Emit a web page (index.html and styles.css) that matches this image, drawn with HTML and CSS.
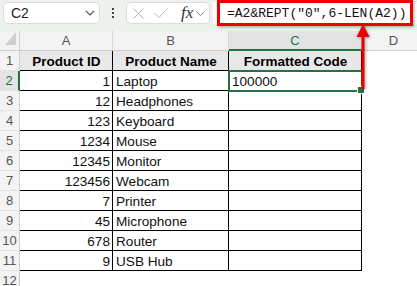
FILE: index.html
```html
<!DOCTYPE html>
<html>
<head>
<meta charset="utf-8">
<link rel="stylesheet" href="styles.css">
</head>
<body>
<div class="app">
  <div class="fbar">
    <div class="namebox">
      <span class="ref">C2</span>
      <svg class="chev" width="10" height="6" viewBox="0 0 10 6"><path d="M1 1 L5 5 L9 1" fill="none" stroke="#555" stroke-width="1.2"/></svg>
    </div>
    <div class="dots"><i></i><i></i><i></i></div>
    <div class="fxbox">
      <svg class="ico" width="11" height="11" viewBox="0 0 11 11"><path d="M0.5 0.5 L10.5 10.5 M10.5 0.5 L0.5 10.5" stroke="#b3b3b3" stroke-width="1"/></svg>
      <svg class="ico chk" width="14" height="10" viewBox="0 0 14 10"><path d="M0.5 5 L5 9.5 L13.5 0.5" fill="none" stroke="#b3b3b3" stroke-width="1"/></svg>
      <span class="fx">fx</span>
      <svg class="chev2" width="9" height="5" viewBox="0 0 9 5"><path d="M0.5 0.5 L4.5 4.5 L8.5 0.5" fill="none" stroke="#888" stroke-width="1"/></svg>
    </div>
    <div class="input"><span class="formula">=A2&amp;REPT("0",6-LEN(A2))</span></div>
  </div>

  <div class="sheet">
    <div class="corner"><svg width="11" height="13" viewBox="0 0 11 13"><polygon points="11,0 11,13 0,13" fill="#cfcfcf"/></svg></div>
    <div class="ch">A</div>
    <div class="ch">B</div>
    <div class="ch sel">C</div>
    <div class="ch">D</div>

    <div class="rh">1</div>
    <div class="c th">Product ID</div>
    <div class="c th">Product Name</div>
    <div class="c th">Formatted Code</div>
    <div class="e"></div>

    <div class="rh sel">2</div>
    <div class="c num">1</div>
    <div class="c">Laptop</div>
    <div class="c active">100000</div>
    <div class="e"></div>

    <div class="rh">3</div>
    <div class="c num">12</div>
    <div class="c">Headphones</div>
    <div class="c"></div>
    <div class="e"></div>

    <div class="rh">4</div>
    <div class="c num">123</div>
    <div class="c">Keyboard</div>
    <div class="c"></div>
    <div class="e"></div>

    <div class="rh">5</div>
    <div class="c num">1234</div>
    <div class="c">Mouse</div>
    <div class="c"></div>
    <div class="e"></div>

    <div class="rh">6</div>
    <div class="c num">12345</div>
    <div class="c">Monitor</div>
    <div class="c"></div>
    <div class="e"></div>

    <div class="rh">7</div>
    <div class="c num">123456</div>
    <div class="c">Webcam</div>
    <div class="c"></div>
    <div class="e"></div>

    <div class="rh">8</div>
    <div class="c num">7</div>
    <div class="c">Printer</div>
    <div class="c"></div>
    <div class="e"></div>

    <div class="rh">9</div>
    <div class="c num">45</div>
    <div class="c">Microphone</div>
    <div class="c"></div>
    <div class="e"></div>

    <div class="rh">10</div>
    <div class="c num">678</div>
    <div class="c">Router</div>
    <div class="c"></div>
    <div class="e"></div>

    <div class="rh">11</div>
    <div class="c num">9</div>
    <div class="c">USB Hub</div>
    <div class="c"></div>
    <div class="e"></div>

    <div class="rh">12</div>
    <div class="e"></div>
    <div class="e"></div>
    <div class="e"></div>
    <div class="e"></div>
  </div>

  <div class="callout"></div>
  <svg class="arrow" width="14" height="66" viewBox="0 0 14 66">
    <line x1="7" y1="10" x2="7" y2="65" stroke="#ee0000" stroke-width="3"/>
    <polygon points="7,0 0.5,13 13.5,13" fill="#ee0000"/>
  </svg>
</div>
</body>
</html>
```

FILE: styles.css
```css
* { box-sizing: border-box; }
html, body { margin: 0; padding: 0; }
body {
  width: 417px;
  height: 286px;
  overflow: hidden;
  background: #fff;
  font-family: "Liberation Sans", Arial, sans-serif;
}
.app {
  position: relative;
  width: 417px;
  height: 286px;
  overflow: hidden;
}
.fbar {
  height: 31px;
  background: #eef2ec;
  display: flex;
  align-items: flex-start;
  padding: 2px 0 0 3px;
}
.namebox {
  width: 97px;
  height: 22px;
  background: #fff;
  border: 1px solid #dcdcdc;
  border-radius: 5px;
  display: flex;
  align-items: center;
  justify-content: space-between;
  padding: 0 4px 0 7px;
}
.ref { font-size: 14px; color: #222; }
.chev { display: block; }
.dots {
  width: 26px;
  height: 22px;
  display: flex;
  flex-direction: column;
  align-items: center;
  justify-content: center;
  gap: 2px;
}
.dots i {
  display: block;
  width: 2px;
  height: 2px;
  background: #444;
}
.fxbox {
  width: 84px;
  height: 22px;
  background: #fff;
  border: 1px solid #dcdcdc;
  border-radius: 5px;
  display: flex;
  align-items: center;
  padding: 0 0 0 6px;
}
.fxbox .ico { display: block; }
.fxbox .chk { margin-left: 10px; }
.fx {
  font-family: "Liberation Serif", "DejaVu Serif", serif;
  font-style: italic;
  font-size: 17px;
  color: #333;
  margin-left: 13px;
  line-height: 18px;
}
.chev2 { display: block; margin-left: 3px; }
.input {
  flex: 1;
  height: 22px;
  margin-left: 3px;
  background: #fff;
  display: flex;
  align-items: center;
  padding-left: 14px;
}
.formula {
  font-family: "Liberation Mono", "DejaVu Sans Mono", monospace;
  font-size: 13px;
  color: #111;
  white-space: nowrap;
}
.sheet {
  display: grid;
  grid-template-columns: 20px 93px 116px 133px 64px;
  grid-auto-rows: 20px;
  width: 426px;
}
.corner {
  background: #f3f3f3;
  border-right: 1px solid #cfcfcf;
  border-bottom: 1px solid #cfcfcf;
  display: flex;
  align-items: flex-end;
  justify-content: flex-end;
  padding: 0 3px 5px 0;
}
.corner svg { display: block; }
.ch {
  background: #f3f3f3;
  border-right: 1px solid #d6d6d6;
  border-bottom: 1px solid #cfcfcf;
  display: flex;
  align-items: center;
  justify-content: center;
  font-size: 13px;
  color: #555;
}
.ch.sel {
  background: #e3e3e3;
  color: #217346;
  border-bottom: 2px solid #217346;
}
.rh {
  background: #f3f3f3;
  border-right: 1px solid #cfcfcf;
  border-bottom: 1px solid #e2e2e2;
  display: flex;
  align-items: center;
  justify-content: center;
  font-size: 13px;
  color: #555;
}
.rh.sel {
  background: #e3e3e3;
  color: #217346;
  border-right: 2px solid #217346;
}
.c {
  border-right: 1px solid #000;
  border-bottom: 1px solid #000;
  display: flex;
  align-items: flex-end;
  padding: 0 2px 1px 3px;
  font-size: 13.6px;
  color: #111;
  white-space: nowrap;
}
.c.num { justify-content: flex-end; }
.c.th {
  background: #e8e8e8;
  font-weight: bold;
  font-size: 13.5px;
  justify-content: center;
  color: #000;
}
.c.active {
  position: relative;
  outline: 2px solid #217346;
  outline-offset: -1px;
}
.c.active::after {
  content: "";
  position: absolute;
  right: -4px;
  bottom: -4px;
  width: 6px;
  height: 6px;
  background: #217346;
  border: 1px solid #fff;
}
.e { background: #fff; }
.callout {
  position: absolute;
  left: 217px;
  top: 0;
  width: 196px;
  height: 26px;
  border: 3px solid #ee0000;
  box-shadow: 1px 1px 3px rgba(0,0,0,0.35);
}
.arrow {
  position: absolute;
  left: 356px;
  top: 24px;
  filter: drop-shadow(1px 1px 1.5px rgba(0,0,0,0.35));
}
```
